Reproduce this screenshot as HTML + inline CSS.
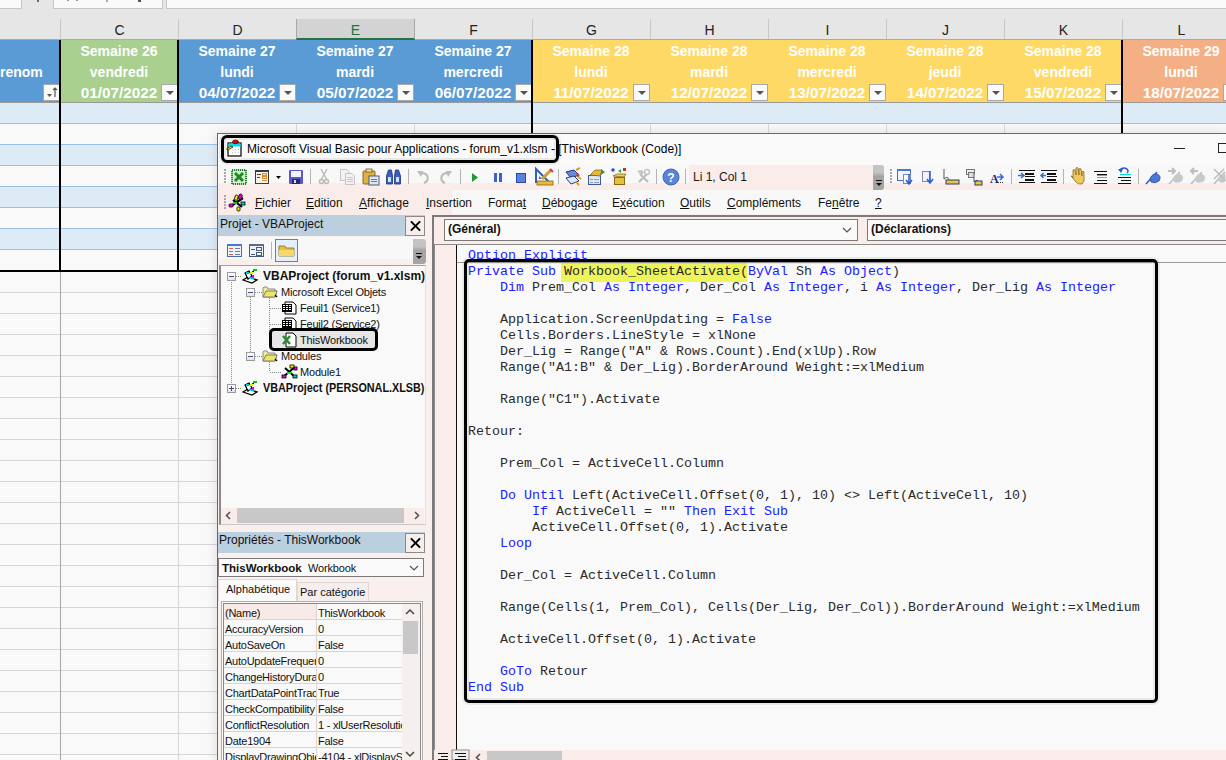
<!DOCTYPE html>
<html><head><meta charset="utf-8">
<style>
*{margin:0;padding:0;box-sizing:border-box}
html,body{width:1226px;height:760px;overflow:hidden;background:#f9f9f9;font-family:"Liberation Sans",sans-serif}
.a{position:absolute}
#xl{position:absolute;left:0;top:0;width:1226px;height:760px;background:#f9f9f9}
.colh{position:absolute;top:19px;height:20px;border-left:1px solid #c8c8c8;font-size:14px;color:#222;text-align:center;line-height:23px}
.hd{position:absolute;top:40px;height:62px;color:#fff;font-weight:bold;font-size:14px;text-align:center;line-height:21px;padding-top:1px}
.hd span:nth-child(3){font-size:15.3px;line-height:20px}
.hd span{display:block}
.dd{position:absolute;width:17px;height:17px;top:84px;background:#fafafa;border:1px solid #a8a8a8}
.dd:after{content:"";position:absolute;left:4px;top:6px;border-left:4px solid transparent;border-right:4px solid transparent;border-top:4px solid #555}
.xb{width:20px;height:20px;background:#f6eeec;border:1px solid #8a8a8a}
.xb:before,.xb:after{content:"";position:absolute;left:3px;top:8px;width:13px;height:2px;background:#000;transform:rotate(45deg)}
.xb:after{transform:rotate(-45deg)}
.kw{color:#2020ff}
.hl{background:#eef55c}
.vb{position:absolute;background:#000;width:2px}
</style></head><body>
<div id="xl">
  <!-- formula bar strip -->
  <div class="a" style="left:0;top:0;width:1226px;height:40px;background:#e6e6e6"></div>
  <div class="a" style="left:0;top:0;width:22px;height:9px;background:#fafafa;border-right:1px solid #c6c6c6;border-bottom:1px solid #c6c6c6"></div>
  <div class="a" style="left:53px;top:0;width:110px;height:9px;background:#fafafa;border:1px solid #c6c6c6;border-top:0"></div>
  <div class="a" style="left:166px;top:0;width:1060px;height:9px;background:#fafafa;border-left:1px solid #c6c6c6;border-bottom:1px solid #c6c6c6"></div>
  <div class="a" style="left:37px;top:0;width:2px;height:2px;background:#666"></div><div class="a" style="left:67px;top:0;width:2px;height:1px;background:#999"></div><div class="a" style="left:76px;top:0;width:2px;height:1px;background:#999"></div><div class="a" style="left:106px;top:0;width:2px;height:2px;background:#aaa"></div><div class="a" style="left:138px;top:0;width:3px;height:2px;background:#555"></div>
  <!-- column headers -->
  <div class="colh" style="left:60px;width:118px">C</div>
  <div class="colh" style="left:178px;width:118px">D</div>
  <div class="colh" style="left:296px;width:119px;height:21px;background:#d3d3d3;color:#217346;border-left-color:#a8a8a8;border-right:1px solid #a8a8a8;border-bottom:2px solid #217346;z-index:2">E</div>
  <div class="colh" style="left:414px;width:118px">F</div>
  <div class="colh" style="left:532px;width:118px">G</div>
  <div class="colh" style="left:650px;width:118px">H</div>
  <div class="colh" style="left:768px;width:118px">I</div>
  <div class="colh" style="left:886px;width:118px">J</div>
  <div class="colh" style="left:1004px;width:118px">K</div>
  <div class="colh" style="left:1122px;width:118px">L</div>
  <div class="a" style="left:0;top:39px;width:1226px;height:1px;background:#ababab"></div>
  <!-- table header -->
  <div class="hd" style="left:0;width:60px;background:#5b9bd5;text-align:right;padding-right:19px"><span>&nbsp;</span><span>renom</span></div>
  <div class="a" style="left:43px;top:84px;width:17px;height:17px;background:#fafafa;border:1px solid #a8a8a8"><svg class="a" style="left:0;top:0" width="15" height="15" viewBox="0 0 15 15"><path d="M3 9 L8 9 L5.5 12 Z" fill="#555"/><path d="M11 3 V12 M9 5 L11 3 L13 5" stroke="#555" stroke-width="1.2" fill="none"/></svg></div>
  <div class="hd" style="left:60px;width:118px;background:#a9d08e"><span>Semaine 26</span><span>vendredi</span><span>01/07/2022</span></div>
  <div class="hd" style="left:178px;width:118px;background:#5b9bd5"><span>Semaine 27</span><span>lundi</span><span>04/07/2022</span></div>
  <div class="hd" style="left:296px;width:118px;background:#5b9bd5"><span>Semaine 27</span><span>mardi</span><span>05/07/2022</span></div>
  <div class="hd" style="left:414px;width:118px;background:#5b9bd5"><span>Semaine 27</span><span>mercredi</span><span>06/07/2022</span></div>
  <div class="hd" style="left:532px;width:118px;background:#ffd966"><span>Semaine 28</span><span>lundi</span><span>11/07/2022</span></div>
  <div class="hd" style="left:650px;width:118px;background:#ffd966"><span>Semaine 28</span><span>mardi</span><span>12/07/2022</span></div>
  <div class="hd" style="left:768px;width:118px;background:#ffd966"><span>Semaine 28</span><span>mercredi</span><span>13/07/2022</span></div>
  <div class="hd" style="left:886px;width:118px;background:#ffd966"><span>Semaine 28</span><span>jeudi</span><span>14/07/2022</span></div>
  <div class="hd" style="left:1004px;width:118px;background:#ffd966"><span>Semaine 28</span><span>vendredi</span><span>15/07/2022</span></div>
  <div class="hd" style="left:1122px;width:118px;background:#f4b084"><span>Semaine 29</span><span>lundi</span><span>18/07/2022</span></div>
  <div class="dd" style="left:161px"></div>
  <div class="dd" style="left:279px"></div>
  <div class="dd" style="left:397px"></div>
  <div class="dd" style="left:515px"></div>
  <div class="dd" style="left:633px"></div>
  <div class="dd" style="left:751px"></div>
  <div class="dd" style="left:869px"></div>
  <div class="dd" style="left:987px"></div>
  <div class="dd" style="left:1105px"></div>
  <div class="dd" style="left:1223px"></div>
  <div class="a" style="left:0;top:102px;width:1226px;height:1px;background:#9a9a9a"></div>
  <!-- rows -->
  <div class="a" style="left:0;top:103px;width:1226px;height:20px;background:#ddebf7"></div>
<div class="a" style="left:0;top:123px;width:1226px;height:1px;background:#9bc2e6"></div>
<div class="a" style="left:0;top:124px;width:1226px;height:20px;background:#f9f9f9"></div>
<div class="a" style="left:296px;top:124px;width:1px;height:20px;background:#d9d9d9"></div>
<div class="a" style="left:414px;top:124px;width:1px;height:20px;background:#d9d9d9"></div>
<div class="a" style="left:650px;top:124px;width:1px;height:20px;background:#d9d9d9"></div>
<div class="a" style="left:768px;top:124px;width:1px;height:20px;background:#d9d9d9"></div>
<div class="a" style="left:886px;top:124px;width:1px;height:20px;background:#d9d9d9"></div>
<div class="a" style="left:1004px;top:124px;width:1px;height:20px;background:#d9d9d9"></div>
<div class="a" style="left:0;top:144px;width:1226px;height:1px;background:#9bc2e6"></div>
<div class="a" style="left:0;top:145px;width:1226px;height:20px;background:#ddebf7"></div>
<div class="a" style="left:0;top:165px;width:1226px;height:1px;background:#9bc2e6"></div>
<div class="a" style="left:0;top:166px;width:1226px;height:20px;background:#f9f9f9"></div>
<div class="a" style="left:296px;top:166px;width:1px;height:20px;background:#d9d9d9"></div>
<div class="a" style="left:414px;top:166px;width:1px;height:20px;background:#d9d9d9"></div>
<div class="a" style="left:650px;top:166px;width:1px;height:20px;background:#d9d9d9"></div>
<div class="a" style="left:768px;top:166px;width:1px;height:20px;background:#d9d9d9"></div>
<div class="a" style="left:886px;top:166px;width:1px;height:20px;background:#d9d9d9"></div>
<div class="a" style="left:1004px;top:166px;width:1px;height:20px;background:#d9d9d9"></div>
<div class="a" style="left:0;top:186px;width:1226px;height:1px;background:#9bc2e6"></div>
<div class="a" style="left:0;top:187px;width:1226px;height:20px;background:#ddebf7"></div>
<div class="a" style="left:0;top:207px;width:1226px;height:1px;background:#9bc2e6"></div>
<div class="a" style="left:0;top:208px;width:1226px;height:20px;background:#f9f9f9"></div>
<div class="a" style="left:296px;top:208px;width:1px;height:20px;background:#d9d9d9"></div>
<div class="a" style="left:414px;top:208px;width:1px;height:20px;background:#d9d9d9"></div>
<div class="a" style="left:650px;top:208px;width:1px;height:20px;background:#d9d9d9"></div>
<div class="a" style="left:768px;top:208px;width:1px;height:20px;background:#d9d9d9"></div>
<div class="a" style="left:886px;top:208px;width:1px;height:20px;background:#d9d9d9"></div>
<div class="a" style="left:1004px;top:208px;width:1px;height:20px;background:#d9d9d9"></div>
<div class="a" style="left:0;top:228px;width:1226px;height:1px;background:#9bc2e6"></div>
<div class="a" style="left:0;top:229px;width:1226px;height:20px;background:#ddebf7"></div>
<div class="a" style="left:0;top:249px;width:1226px;height:1px;background:#9bc2e6"></div>
<div class="a" style="left:0;top:250px;width:1226px;height:20px;background:#f9f9f9"></div>
<div class="a" style="left:296px;top:250px;width:1px;height:20px;background:#d9d9d9"></div>
<div class="a" style="left:414px;top:250px;width:1px;height:20px;background:#d9d9d9"></div>
<div class="a" style="left:650px;top:250px;width:1px;height:20px;background:#d9d9d9"></div>
<div class="a" style="left:768px;top:250px;width:1px;height:20px;background:#d9d9d9"></div>
<div class="a" style="left:886px;top:250px;width:1px;height:20px;background:#d9d9d9"></div>
<div class="a" style="left:1004px;top:250px;width:1px;height:20px;background:#d9d9d9"></div>
<div class="a" style="left:0;top:270px;width:1226px;height:2px;background:#000"></div>
<div class="a" style="left:0;top:292px;width:217px;height:1px;background:#d6d6d6"></div>
<div class="a" style="left:0;top:313px;width:217px;height:1px;background:#d6d6d6"></div>
<div class="a" style="left:0;top:334px;width:217px;height:1px;background:#d6d6d6"></div>
<div class="a" style="left:0;top:355px;width:217px;height:1px;background:#d6d6d6"></div>
<div class="a" style="left:0;top:376px;width:217px;height:1px;background:#d6d6d6"></div>
<div class="a" style="left:0;top:397px;width:217px;height:1px;background:#d6d6d6"></div>
<div class="a" style="left:0;top:418px;width:217px;height:1px;background:#d6d6d6"></div>
<div class="a" style="left:0;top:439px;width:217px;height:1px;background:#d6d6d6"></div>
<div class="a" style="left:0;top:460px;width:217px;height:1px;background:#d6d6d6"></div>
<div class="a" style="left:0;top:481px;width:217px;height:1px;background:#d6d6d6"></div>
<div class="a" style="left:0;top:502px;width:217px;height:1px;background:#d6d6d6"></div>
<div class="a" style="left:0;top:523px;width:217px;height:1px;background:#d6d6d6"></div>
<div class="a" style="left:0;top:544px;width:217px;height:1px;background:#d6d6d6"></div>
<div class="a" style="left:0;top:565px;width:217px;height:1px;background:#d6d6d6"></div>
<div class="a" style="left:0;top:586px;width:217px;height:1px;background:#d6d6d6"></div>
<div class="a" style="left:0;top:607px;width:217px;height:1px;background:#d6d6d6"></div>
<div class="a" style="left:0;top:628px;width:217px;height:1px;background:#d6d6d6"></div>
<div class="a" style="left:0;top:649px;width:217px;height:1px;background:#d6d6d6"></div>
<div class="a" style="left:0;top:670px;width:217px;height:1px;background:#d6d6d6"></div>
<div class="a" style="left:0;top:691px;width:217px;height:1px;background:#d6d6d6"></div>
<div class="a" style="left:0;top:712px;width:217px;height:1px;background:#d6d6d6"></div>
<div class="a" style="left:0;top:733px;width:217px;height:1px;background:#d6d6d6"></div>
<div class="a" style="left:0;top:754px;width:217px;height:1px;background:#d6d6d6"></div>
<div class="a" style="left:0;top:775px;width:217px;height:1px;background:#d6d6d6"></div>
<div class="a" style="left:60px;top:272px;width:1px;height:488px;background:#a6a6a6"></div>
<div class="a" style="left:178px;top:272px;width:1px;height:488px;background:#d6d6d6"></div>
<div class="vb" style="left:59px;top:40px;height:232px"></div>
<div class="vb" style="left:177px;top:40px;height:232px"></div>
<div class="vb" style="left:531px;top:40px;height:232px"></div>
<div class="vb" style="left:1121px;top:40px;height:232px"></div>
</div>
<div id="vbe" style="position:absolute;left:0;top:0;width:1226px;height:760px">
 <!-- shadow -->
 
 
 <!-- window -->
 <div class="a" style="left:217px;top:133px;width:1009px;height:627px;background:#f9efec;border-left:1px solid #686868;border-top:1px solid #686868;box-shadow:0 0 9px 1px rgba(110,80,80,0.16)"></div>
 <!-- title bar -->
 <div class="a" style="left:218px;top:134px;width:1008px;height:31px;background:#fafafa"></div>
 <div class="a" style="left:247px;top:141px;font-size:12px;line-height:16px;color:#000;white-space:nowrap">Microsoft Visual Basic pour Applications - forum_v1.xlsm - [ThisWorkbook (Code)]</div>
 <div class="a" style="left:1174px;top:148px;width:11px;height:1px;background:#222"></div>
 <div class="a" style="left:1218px;top:143px;width:10px;height:10px;border:1px solid #222"></div>
 <div class="a" style="left:221px;top:135px;width:338px;height:28px;border:3.5px solid #000;border-radius:6px;box-shadow:0 0 0 2px rgba(0,0,0,.06),inset 0 0 0 2px rgba(0,0,0,.07)"></div>
 <!-- toolbar row 1 -->
 <div class="a" style="left:218px;top:165px;width:1008px;height:18px;background:#f8f8f8"></div>
 <div class="a" style="left:218px;top:183px;width:1008px;height:7px;background:#f9ece9"></div>
 <div class="a" style="left:689px;top:165px;width:185px;height:25px;background:#f9ece9"></div>
 <div class="a" style="left:693px;top:170px;font-size:12px;line-height:14px;color:#1a1a1a">Li 1, Col 1</div>
 <div class="a" style="left:873px;top:165px;width:11px;height:25px;background:linear-gradient(#c4c4c4,#c4c4c4 30%,#a4a4a4 45%,#a4a4a4);border-radius:0 3px 3px 0"></div>
 <!-- menu bar -->
 <div class="a" style="left:218px;top:190px;width:234px;height:25px;background:#f9ece9"></div>
 <div class="a" style="left:452px;top:190px;width:774px;height:24px;background:#f8f8f8"></div>
 <div id="menus" style="position:absolute;left:0;top:196px;font-size:12px;line-height:15px;color:#111">
  <span class="a" style="left:255px"><u>F</u>ichier</span>
  <span class="a" style="left:306px"><u>E</u>dition</span>
  <span class="a" style="left:359px"><u>A</u>ffichage</span>
  <span class="a" style="left:426px"><u>I</u>nsertion</span>
  <span class="a" style="left:488px">Forma<u>t</u></span>
  <span class="a" style="left:542px"><u>D</u>ébogage</span>
  <span class="a" style="left:612px">E<u>x</u>écution</span>
  <span class="a" style="left:680px"><u>O</u>utils</span>
  <span class="a" style="left:727px"><u>C</u>ompléments</span>
  <span class="a" style="left:818px">Fe<u>n</u>être</span>
  <span class="a" style="left:875px"><u>?</u></span>
 </div>
 <!-- project pane -->
 <div class="a" style="left:218px;top:215px;width:207px;height:21px;background:#bccfdf"></div>
 <div class="a" style="left:220px;top:216px;font-size:12px;line-height:16px;color:#111">Projet - VBAProject</div>
 <div class="a xb" style="left:405px;top:216px"></div>
 <div class="a" style="left:218px;top:237px;width:207px;height:22px;background:#f8f8f8"></div>
 <div class="a" style="left:413px;top:239px;width:13px;height:25px;background:linear-gradient(#c4c4c4,#c4c4c4 30%,#a4a4a4 45%,#a4a4a4);border-radius:0 3px 3px 0"></div>
 <div class="a" style="left:219px;top:265px;width:207px;height:260px;background:#f9f9f9;border-left:2px solid #8a8a8a;border-top:1px solid #a0a0a0;border-bottom:1px solid #c8c8c8;border-right:1px solid #e0e0e0"></div>
 <div id="tree" style="position:absolute;left:0;top:0;font-size:11px;letter-spacing:-0.2px;line-height:16px;color:#111"><div class="a" style="left:231px;top:282px;width:1px;height:102px;background:repeating-linear-gradient(#8a8a8a 0 1px,transparent 1px 2px)"></div>
<div class="a" style="left:250px;top:297px;width:1px;height:55px;background:repeating-linear-gradient(#8a8a8a 0 1px,transparent 1px 2px)"></div>
<div class="a" style="left:269px;top:298px;width:1px;height:43px;background:repeating-linear-gradient(#8a8a8a 0 1px,transparent 1px 2px)"></div>
<div class="a" style="left:269px;top:362px;width:1px;height:10px;background:repeating-linear-gradient(#8a8a8a 0 1px,transparent 1px 2px)"></div>
<div class="a" style="left:236px;top:276px;width:6px;height:1px;background:repeating-linear-gradient(90deg,#8a8a8a 0 1px,transparent 1px 2px)"></div>
<div class="a" style="left:255px;top:292px;width:7px;height:1px;background:repeating-linear-gradient(90deg,#8a8a8a 0 1px,transparent 1px 2px)"></div>
<div class="a" style="left:255px;top:356px;width:7px;height:1px;background:repeating-linear-gradient(90deg,#8a8a8a 0 1px,transparent 1px 2px)"></div>
<div class="a" style="left:236px;top:388px;width:6px;height:1px;background:repeating-linear-gradient(90deg,#8a8a8a 0 1px,transparent 1px 2px)"></div>
<div class="a" style="left:270px;top:308px;width:11px;height:1px;background:repeating-linear-gradient(90deg,#8a8a8a 0 1px,transparent 1px 2px)"></div>
<div class="a" style="left:270px;top:324px;width:11px;height:1px;background:repeating-linear-gradient(90deg,#8a8a8a 0 1px,transparent 1px 2px)"></div>
<div class="a" style="left:270px;top:340px;width:11px;height:1px;background:repeating-linear-gradient(90deg,#8a8a8a 0 1px,transparent 1px 2px)"></div>
<div class="a" style="left:270px;top:372px;width:11px;height:1px;background:repeating-linear-gradient(90deg,#8a8a8a 0 1px,transparent 1px 2px)"></div>
<div class="a" style="left:227px;top:272px;width:9px;height:9px;border:1px solid #9a9a9a;background:linear-gradient(#fff,#e4e4e4)"><div class="a" style="left:1px;top:3px;width:5px;height:1px;background:#3a4f8a"></div></div>
<svg class="a" style="left:242px;top:268px" width="17" height="16" viewBox="0 0 17 16"><path d="M1 12 L6 9 L15 12 L10 15 Z" fill="#fff" stroke="#000" stroke-width="1.3"/><path d="M3 5 L7 3 L10 8 L6 11 Z" fill="#dff" stroke="#000" stroke-width="1.2"/><rect x="4" y="4" width="3" height="2" fill="#0cc"/><rect x="7" y="9" width="5" height="2" fill="#0cc"/><path d="M9 5 L12 3" stroke="#000" stroke-width="1.2"/><rect x="11" y="1" width="4" height="2" fill="#0c0"/><rect x="8" y="4" width="3" height="2" fill="#ee0"/><rect x="10" y="7" width="2" height="3" fill="#e0e"/></svg>
<div class="a" style="left:263px;top:268px;font-weight:bold;font-size:12px;letter-spacing:0;white-space:nowrap">VBAProject (forum_v1.xlsm)</div>
<div class="a" style="left:246px;top:288px;width:9px;height:9px;border:1px solid #9a9a9a;background:linear-gradient(#fff,#e4e4e4)"><div class="a" style="left:1px;top:3px;width:5px;height:1px;background:#3a4f8a"></div></div>
<svg class="a" style="left:262px;top:286px" width="16" height="12" viewBox="0 0 16 12"><path d="M1 2 L1 11 L13 11 L15 5 L13 5 L13 3 L6 3 L5 1 L2 1 Z" fill="#f1ef9a" stroke="#8a8a8a" stroke-width="1"/><path d="M1 11 L4 5 L15 5 L13 11 Z" fill="#ecea5a" stroke="#7a7a7a" stroke-width="1"/><path d="M13 9 L15 11" stroke="#000" stroke-width="1.5"/></svg>
<div class="a" style="left:281px;top:284px;white-space:nowrap">Microsoft Excel Objets</div>
<svg class="a" style="left:281px;top:301px" width="16" height="14" viewBox="0 0 16 14"><path d="M4 1 L12 1 L15 4 L15 13 L4 13 Z" fill="#fff" stroke="#000" stroke-width="1"/><rect x="1" y="3" width="10" height="8" fill="#000"/><g fill="#fff"><rect x="2" y="4" width="2" height="1"/><rect x="5" y="4" width="2" height="1"/><rect x="8" y="4" width="2" height="1"/><rect x="2" y="6" width="2" height="1"/><rect x="5" y="6" width="2" height="1"/><rect x="8" y="6" width="2" height="1"/><rect x="2" y="8" width="2" height="1"/><rect x="5" y="8" width="2" height="1"/><rect x="8" y="8" width="2" height="1"/></g></svg>
<div class="a" style="left:300px;top:300px;white-space:nowrap">Feuil1 (Service1)</div>
<svg class="a" style="left:281px;top:317px" width="16" height="14" viewBox="0 0 16 14"><path d="M4 1 L12 1 L15 4 L15 13 L4 13 Z" fill="#fff" stroke="#000" stroke-width="1"/><rect x="1" y="3" width="10" height="8" fill="#000"/><g fill="#fff"><rect x="2" y="4" width="2" height="1"/><rect x="5" y="4" width="2" height="1"/><rect x="8" y="4" width="2" height="1"/><rect x="2" y="6" width="2" height="1"/><rect x="5" y="6" width="2" height="1"/><rect x="8" y="6" width="2" height="1"/><rect x="2" y="8" width="2" height="1"/><rect x="5" y="8" width="2" height="1"/><rect x="8" y="8" width="2" height="1"/></g></svg>
<div class="a" style="left:300px;top:316px;white-space:nowrap">Feuil2 (Service2)</div>
<div class="a" style="left:272px;top:331px;width:103px;height:17px;background:#e6e6e6"></div>
<svg class="a" style="left:281px;top:332px" width="16" height="16" viewBox="0 0 16 16"><path d="M5 1 L12 1 L15 4 L15 15 L5 15 Z" fill="#fff" stroke="#000" stroke-width="1"/><path d="M2 4 L9 12 M9 4 L2 12" stroke="#2f8a2f" stroke-width="2.5"/></svg>
<div class="a" style="left:300px;top:332px;white-space:nowrap">ThisWorkbook</div>
<div class="a" style="left:269px;top:328px;width:109px;height:23px;border:3.5px solid #000;border-radius:5px"></div>
<div class="a" style="left:246px;top:352px;width:9px;height:9px;border:1px solid #9a9a9a;background:linear-gradient(#fff,#e4e4e4)"><div class="a" style="left:1px;top:3px;width:5px;height:1px;background:#3a4f8a"></div></div>
<svg class="a" style="left:262px;top:350px" width="16" height="12" viewBox="0 0 16 12"><path d="M1 2 L1 11 L13 11 L15 5 L13 5 L13 3 L6 3 L5 1 L2 1 Z" fill="#f1ef9a" stroke="#8a8a8a" stroke-width="1"/><path d="M1 11 L4 5 L15 5 L13 11 Z" fill="#ecea5a" stroke="#7a7a7a" stroke-width="1"/><path d="M13 9 L15 11" stroke="#000" stroke-width="1.5"/></svg>
<div class="a" style="left:281px;top:348px;white-space:nowrap">Modules</div>
<svg class="a" style="left:281px;top:364px" width="17" height="16" viewBox="0 0 17 16"><path d="M2 13 L14 3 M4 4 L14 13" stroke="#000" stroke-width="2"/><rect x="9" y="1" width="4" height="3" fill="#ee0" stroke="#000" stroke-width=".8"/><rect x="13" y="3" width="3" height="3" fill="#e0e" stroke="#000" stroke-width=".8"/><rect x="1" y="11" width="4" height="3" fill="#e0e" stroke="#000" stroke-width=".8"/><rect x="6" y="8" width="4" height="2" fill="#0e0"/><rect x="12" y="11" width="4" height="3" fill="#0cc" stroke="#000" stroke-width=".8"/></svg>
<div class="a" style="left:300px;top:364px;white-space:nowrap">Module1</div>
<div class="a" style="left:227px;top:384px;width:9px;height:9px;border:1px solid #9a9a9a;background:linear-gradient(#fff,#e4e4e4)"><div class="a" style="left:1px;top:3px;width:5px;height:1px;background:#3a4f8a"></div><div class="a" style="left:3px;top:1px;width:1px;height:5px;background:#3a4f8a"></div></div>
<svg class="a" style="left:242px;top:380px" width="17" height="16" viewBox="0 0 17 16"><path d="M1 12 L6 9 L15 12 L10 15 Z" fill="#fff" stroke="#000" stroke-width="1.3"/><path d="M3 5 L7 3 L10 8 L6 11 Z" fill="#dff" stroke="#000" stroke-width="1.2"/><rect x="4" y="4" width="3" height="2" fill="#0cc"/><rect x="7" y="9" width="5" height="2" fill="#0cc"/><path d="M9 5 L12 3" stroke="#000" stroke-width="1.2"/><rect x="11" y="1" width="4" height="2" fill="#0c0"/><rect x="8" y="4" width="3" height="2" fill="#ee0"/><rect x="10" y="7" width="2" height="3" fill="#e0e"/></svg>
<div class="a" style="left:263px;top:380px;font-weight:bold;font-size:12px;letter-spacing:0;white-space:nowrap;transform:scaleX(0.9);transform-origin:0 0">VBAProject (PERSONAL.XLSB)</div></div>
 <!-- tree scrollbar -->
 <div class="a" style="left:221px;top:508px;width:203px;height:16px;background:#f9ece9"></div>
 <div class="a" style="left:237px;top:508px;width:167px;height:15px;background:#c8c8c8"></div>
 <!-- properties -->
 <div class="a" style="left:218px;top:532px;width:207px;height:21px;background:#bccfdf"></div>
 <div class="a" style="left:219px;top:532px;font-size:12px;line-height:16px;color:#111">Propriétés - ThisWorkbook</div>
 <div class="a xb" style="left:405px;top:533px"></div>
 <div class="a" style="left:218px;top:558px;width:206px;height:19px;background:#fafafa;border:1px solid #7a7a7a"></div>
 <div class="a" style="left:222px;top:561px;font-size:11.5px;line-height:14px;color:#111;white-space:nowrap"><b>ThisWorkbook</b></div><div class="a" style="left:308px;top:561px;font-size:11px;letter-spacing:-0.15px;line-height:14px;color:#111;white-space:nowrap">Workbook</div>
 <div class="a" style="left:218px;top:579px;width:79px;height:22px;background:#fafafa;border:1px solid #e0d6d3;border-bottom:0"></div>
 <div class="a" style="left:226px;top:582px;font-size:11px;line-height:14px;color:#111">Alphabétique</div>
 <div class="a" style="left:297px;top:582px;width:72px;height:19px;background:#f4eeec;border:1px solid #e0d6d3;border-bottom:0"></div>
 <div class="a" style="left:300px;top:585px;font-size:11px;line-height:14px;color:#111">Par catégorie</div>
 <div class="a" style="left:221px;top:601px;width:202px;height:159px;background:#f9f9f9;border:1px solid #b0b0b0;border-bottom:0"></div>
 <div class="a" style="left:223px;top:603px;width:198px;height:157px;border:1px solid #8a8a8a;border-bottom:0"></div>
 <div id="props" style="position:absolute;left:0;top:0;font-size:11px;letter-spacing:-0.25px;line-height:16px;color:#111"><div class="a" style="left:224px;top:604px;width:92px;height:15px;background:#f8ebe7"></div>
<div class="a" style="left:225px;top:605px;width:91px;height:16px;overflow:hidden;white-space:nowrap">(Name)</div>
<div class="a" style="left:318px;top:605px;width:84px;height:16px;overflow:hidden;white-space:nowrap">ThisWorkbook</div>
<div class="a" style="left:224px;top:619px;width:178px;height:1px;background:#dcd4cc"></div>
<div class="a" style="left:225px;top:621px;width:91px;height:16px;overflow:hidden;white-space:nowrap">AccuracyVersion</div>
<div class="a" style="left:318px;top:621px;width:84px;height:16px;overflow:hidden;white-space:nowrap">0</div>
<div class="a" style="left:224px;top:635px;width:178px;height:1px;background:#dcd4cc"></div>
<div class="a" style="left:225px;top:637px;width:91px;height:16px;overflow:hidden;white-space:nowrap">AutoSaveOn</div>
<div class="a" style="left:318px;top:637px;width:84px;height:16px;overflow:hidden;white-space:nowrap">False</div>
<div class="a" style="left:224px;top:651px;width:178px;height:1px;background:#dcd4cc"></div>
<div class="a" style="left:225px;top:653px;width:91px;height:16px;overflow:hidden;white-space:nowrap">AutoUpdateFrequency</div>
<div class="a" style="left:318px;top:653px;width:84px;height:16px;overflow:hidden;white-space:nowrap">0</div>
<div class="a" style="left:224px;top:667px;width:178px;height:1px;background:#dcd4cc"></div>
<div class="a" style="left:225px;top:669px;width:91px;height:16px;overflow:hidden;white-space:nowrap">ChangeHistoryDuration</div>
<div class="a" style="left:318px;top:669px;width:84px;height:16px;overflow:hidden;white-space:nowrap">0</div>
<div class="a" style="left:224px;top:683px;width:178px;height:1px;background:#dcd4cc"></div>
<div class="a" style="left:225px;top:685px;width:91px;height:16px;overflow:hidden;white-space:nowrap">ChartDataPointTrack</div>
<div class="a" style="left:318px;top:685px;width:84px;height:16px;overflow:hidden;white-space:nowrap">True</div>
<div class="a" style="left:224px;top:699px;width:178px;height:1px;background:#dcd4cc"></div>
<div class="a" style="left:225px;top:701px;width:91px;height:16px;overflow:hidden;white-space:nowrap">CheckCompatibility</div>
<div class="a" style="left:318px;top:701px;width:84px;height:16px;overflow:hidden;white-space:nowrap">False</div>
<div class="a" style="left:224px;top:715px;width:178px;height:1px;background:#dcd4cc"></div>
<div class="a" style="left:225px;top:717px;width:91px;height:16px;overflow:hidden;white-space:nowrap">ConflictResolution</div>
<div class="a" style="left:318px;top:717px;width:84px;height:16px;overflow:hidden;white-space:nowrap">1 - xlUserResolution</div>
<div class="a" style="left:224px;top:731px;width:178px;height:1px;background:#dcd4cc"></div>
<div class="a" style="left:225px;top:733px;width:91px;height:16px;overflow:hidden;white-space:nowrap">Date1904</div>
<div class="a" style="left:318px;top:733px;width:84px;height:16px;overflow:hidden;white-space:nowrap">False</div>
<div class="a" style="left:224px;top:747px;width:178px;height:1px;background:#dcd4cc"></div>
<div class="a" style="left:225px;top:749px;width:91px;height:16px;overflow:hidden;white-space:nowrap">DisplayDrawingObjects</div>
<div class="a" style="left:318px;top:749px;width:84px;height:16px;overflow:hidden;white-space:nowrap">-4104 - xlDisplayShapes</div>
<div class="a" style="left:224px;top:763px;width:178px;height:1px;background:#dcd4cc"></div>
<div class="a" style="left:316px;top:604px;width:1px;height:156px;background:#dcd4cc"></div>
<div class="a" style="left:402px;top:604px;width:18px;height:156px;background:#f5efed"></div>
<div class="a" style="left:403px;top:621px;width:15px;height:33px;background:#c8c8c8"></div>
<svg class="a" style="left:404px;top:607px" width="12" height="10" viewBox="0 0 12 10"><path d="M2 7 L6 3 L10 7" fill="none" stroke="#444" stroke-width="1.5"/></svg>
<svg class="a" style="left:404px;top:749px" width="12" height="10" viewBox="0 0 12 10"><path d="M2 3 L6 7 L10 3" fill="none" stroke="#444" stroke-width="1.5"/></svg></div>
 <!-- code window -->
 <div class="a" style="left:432px;top:215px;width:794px;height:545px;background:#f9ece9;border-left:2px solid #7a7a7a;border-top:2px solid #7a7a7a"></div>
 <div class="a" style="left:444px;top:219px;width:414px;height:22px;background:#fafafa;border:1px solid #7a7a7a"></div>
 <div class="a" style="left:448px;top:222px;font-size:12px;font-weight:bold;line-height:15px;color:#111">(Général)</div>
 <div class="a" style="left:867px;top:219px;width:400px;height:22px;background:#fafafa;border:1px solid #7a7a7a"></div>
 <div class="a" style="left:871px;top:222px;font-size:12px;font-weight:bold;line-height:15px;color:#111">(Déclarations)</div>
 <div class="a" style="left:434px;top:244px;width:792px;height:506px;background:#f9f9f9;border-left:1px solid #8a8a8a;border-top:1px solid #8a8a8a"></div>
 <div class="a" style="left:435px;top:245px;width:21px;height:505px;background:#f9ece9"></div>
 <div class="a" style="left:456px;top:245px;width:1px;height:515px;background:#111"></div>
 <div class="a" style="left:457px;top:262px;width:769px;height:1px;background:#9a9a9a"></div>
 <div class="a" style="left:561px;top:263px;width:186px;height:19px;background:#edf55a"></div>
 <div id="code" style="position:absolute;left:468px;top:248px;font-family:'Liberation Mono',monospace;font-size:13.33px;line-height:16px;color:#2a2a2a;white-space:pre"><span class="kw">Option Explicit</span>
<span class="kw">Private Sub </span>Workbook_SheetActivate(<span class="kw">ByVal</span> Sh <span class="kw">As Object</span>)
    <span class="kw">Dim</span> Prem_Col <span class="kw">As Integer</span>, Der_Col <span class="kw">As Integer</span>, i <span class="kw">As Integer</span>, Der_Lig <span class="kw">As Integer</span>

    Application.ScreenUpdating = <span class="kw">False</span>
    Cells.Borders.LineStyle = xlNone
    Der_Lig = Range(&quot;A&quot; &amp; Rows.Count).End(xlUp).Row
    Range(&quot;A1:B&quot; &amp; Der_Lig).BorderAround Weight:=xlMedium

    Range(&quot;C1&quot;).Activate

Retour:

    Prem_Col = ActiveCell.Column

    <span class="kw">Do Until</span> Left(ActiveCell.Offset(0, 1), 10) &lt;&gt; Left(ActiveCell, 10)
        <span class="kw">If</span> ActiveCell = &quot;&quot; <span class="kw">Then Exit Sub</span>
        ActiveCell.Offset(0, 1).Activate
    <span class="kw">Loop</span>

    Der_Col = ActiveCell.Column

    Range(Cells(1, Prem_Col), Cells(Der_Lig, Der_Col)).BorderAround Weight:=xlMedium

    ActiveCell.Offset(0, 1).Activate

    <span class="kw">GoTo</span> Retour
<span class="kw">End Sub</span></div>
 <div class="a" style="left:464px;top:259px;width:694px;height:444px;border:3.5px solid #000;border-radius:5px;box-shadow:0 0 0 2px rgba(0,0,0,.06),inset 0 0 0 2px rgba(0,0,0,.07)"></div>
 <!-- bottom scroll -->
 <div class="a" style="left:436px;top:751px;width:790px;height:9px;background:#f9ece9"></div>
 <div class="a" style="left:487px;top:751px;width:75px;height:9px;background:#c8c8c8"></div>
</div>

<svg class="a" style="left:0;top:0" width="1226" height="760" viewBox="0 0 1226 760">
<!-- title icon -->
<g transform="translate(226,140)">
 <rect x="2" y="3" width="13" height="13" fill="#fff" stroke="#000" stroke-width="1.2"/>
 <rect x="2.5" y="3.5" width="12" height="3" fill="#00e0f0"/>
 <g fill="#bbb"><rect x="6" y="9" width="1" height="1"/><rect x="9" y="9" width="1" height="1"/><rect x="12" y="9" width="1" height="1"/><rect x="6" y="12" width="1" height="1"/><rect x="9" y="12" width="1" height="1"/><rect x="12" y="12" width="1" height="1"/></g>
 <ellipse cx="9.5" cy="1.8" rx="3" ry="1.8" fill="#e00" stroke="#000" stroke-width=".6"/>
 <path d="M0.5 9 L5 6 L7 7 L2 10 Z" fill="#ee0" stroke="#000" stroke-width=".7"/>
</g>
<!-- toolbar1 grip -->
<g fill="#a8a8a8"><rect x="224" y="169" width="2" height="2"/><rect x="224" y="172" width="2" height="2"/><rect x="224" y="175" width="2" height="2"/><rect x="224" y="178" width="2" height="2"/><rect x="224" y="181" width="2" height="2"/></g>
<!-- excel -->
<rect x="232" y="170" width="14" height="14" fill="#d8ecd8" stroke="#1f8a1f" stroke-width="2" stroke-dasharray="1.2 0.8"/>
<path d="M235 173 L243 181 M243 173 L235 181" stroke="#1f8a1f" stroke-width="3"/>
<!-- userform -->
<rect x="255.5" y="170.5" width="13" height="13" fill="#f6f2ee" stroke="#3a3a3a" stroke-width="1"/>
<rect x="255" y="170" width="14" height="2" fill="#3a3a3a"/>
<g fill="#444"><rect x="257" y="174" width="4" height="1"/><rect x="257" y="177" width="3" height="1"/></g>
<g fill="none" stroke="#d98a2a" stroke-width="1"><rect x="262.5" y="173.5" width="4" height="2"/><rect x="262.5" y="176.5" width="4" height="2"/></g>
<rect x="262" y="180" width="5" height="1" fill="#d98a2a"/>
<path d="M276 176 L281 176 L278.5 179 Z" fill="#000"/>
<!-- save -->
<rect x="289" y="170" width="14" height="14" rx="1" fill="#5858c8"/>
<rect x="291" y="171" width="10" height="6" fill="#f0f0ff"/>
<rect x="292" y="179" width="8" height="5" fill="#2a2a70"/>
<rect x="294" y="180" width="2" height="3" fill="#ddd"/>
<rect x="310" y="169" width="1" height="15" fill="#b4b4b4"/>
<!-- cut -->
<g stroke="#b8b8b8" stroke-width="1.4" fill="none"><path d="M321 169 L327 180 M327 169 L321 180"/><circle cx="321.5" cy="181.5" r="2"/><circle cx="326.5" cy="181.5" r="2"/></g>
<!-- copy -->
<g fill="#f2f2f2" stroke="#c4c4c4" stroke-width="1"><path d="M340.5 169.5 H347 L349 171.5 V180.5 H340.5 Z"/><path d="M345.5 173.5 H352 L354.5 176 V184.5 H345.5 Z"/></g>
<g fill="#c8c8c8"><rect x="347" y="177" width="6" height="1"/><rect x="347" y="179" width="6" height="1"/><rect x="347" y="181" width="6" height="1"/></g>
<!-- paste -->
<rect x="363" y="171" width="12" height="13" rx="1" fill="#e0b040" stroke="#8a6a20" stroke-width="1"/>
<rect x="366" y="169" width="6" height="3" fill="#f4e0a0" stroke="#6a5a30" stroke-width=".8"/>
<rect x="369" y="176" width="10" height="9" fill="#dfe6f0" stroke="#4a5a7a" stroke-width="1"/>
<g fill="#6a7a9a"><rect x="371" y="179" width="6" height="1"/><rect x="371" y="181" width="6" height="1"/></g>
<!-- find -->
<g fill="#3a5fb8" stroke="#1a2f78" stroke-width=".8"><path d="M386.5 176 L388.5 170 H391.5 L392.5 176 V184 H386.5 Z"/><path d="M394.5 176 L395.5 170 H398.5 L400.5 176 V184 H394.5 Z"/></g>
<g fill="#cfe0ff"><rect x="388" y="177" width="3" height="5"/><rect x="396" y="177" width="3" height="5"/></g>
<rect x="408" y="169" width="1" height="15" fill="#b4b4b4"/>
<!-- undo/redo -->
<path d="M420 174 A5 5 0 1 1 424 183" fill="none" stroke="#bcbcbc" stroke-width="2.2"/><path d="M417 171 L421 177 L423 171 Z" fill="#bcbcbc"/>
<path d="M449 174 A5 5 0 1 0 445 183" fill="none" stroke="#bcbcbc" stroke-width="2.2"/><path d="M452 171 L448 177 L446 171 Z" fill="#bcbcbc"/>
<rect x="460" y="169" width="1" height="15" fill="#b4b4b4"/>
<!-- run pause stop -->
<path d="M472 173 L478 177.5 L472 182 Z" fill="#1c9c2c"/>
<g fill="#3a5fd0"><rect x="494" y="173" width="3" height="9"/><rect x="499" y="173" width="3" height="9"/></g>
<rect x="516.5" y="173.5" width="9" height="9" fill="#5a80e0" stroke="#2a4aa8" stroke-width="1"/>
<!-- design mode -->
<path d="M536 169 L536 182 L549 182 Z" fill="none" stroke="#2f5fc0" stroke-width="2"/>
<path d="M539 176 L539 179 L542 179 Z" fill="#2f5fc0"/>
<rect x="537" y="181" width="16" height="4" fill="#e8b838" stroke="#8a6a10" stroke-width=".8"/>
<path d="M542 179 L551 170" stroke="#c8a030" stroke-width="3"/><path d="M550 169 L553 172" stroke="#d04040" stroke-width="2"/>
<rect x="558" y="169" width="1" height="15" fill="#b4b4b4"/>
<!-- project explorer -->
<path d="M566 172 L574 170 L579 175 L571 178 Z" fill="#6a8ad8" stroke="#1a3a90" stroke-width="1"/>
<path d="M566 178 L574 176 L579 181 L571 184 Z" fill="#e0e8f8" stroke="#1a3a90" stroke-width="1"/>
<path d="M576 170 L580 168 M577 176 L581 179 M576 182 L579 185" stroke="#e0a020" stroke-width="2"/><circle cx="578" cy="175" r="1.5" fill="#e03030"/>
<!-- properties -->
<rect x="588.5" y="175.5" width="12" height="9" fill="#e0e8f4" stroke="#3a5aa0" stroke-width="1"/>
<g fill="#8a9ac0"><rect x="590" y="179" width="3" height="1"/><rect x="594" y="179" width="5" height="1"/><rect x="590" y="182" width="3" height="1"/><rect x="594" y="182" width="5" height="1"/></g>
<path d="M590 175 L595 170 L602 170 L600 176 Z" fill="#e8b838" stroke="#8a6a20" stroke-width=".8"/>
<path d="M601 169 L605 172 L601 175 Z" fill="#2a9a3a"/>
<!-- object browser -->
<path d="M613 176 L617 174 L626 174 L624 177 Z" fill="#f0d060" stroke="#8a6a10" stroke-width=".8"/>
<rect x="614.5" y="177.5" width="10" height="7" fill="#e8c040" stroke="#8a6a10" stroke-width="1"/>
<circle cx="613" cy="170" r="1.8" fill="#3a4ad0"/><path d="M618 171 L621 169 L621 173 Z" fill="#2aaa3a"/><rect x="623" y="168" width="3" height="3" fill="#d03020"/>
<!-- toolbox -->
<g stroke="#bcbcbc" stroke-width="2.2" fill="none"><path d="M639 182 L647 174"/><path d="M640 174 L648 182"/></g><path d="M637 171 L642 170 L644 173 L641 175 Z" fill="#c4c4c4"/><circle cx="647" cy="172" r="2.5" fill="none" stroke="#c4c4c4" stroke-width="1.5"/>
<rect x="656" y="169" width="1" height="15" fill="#b4b4b4"/>
<!-- help -->
<circle cx="671" cy="177" r="8" fill="#5a84d8" stroke="#3a64b8" stroke-width="1"/>
<text x="671" y="182" font-family="Liberation Sans" font-weight="bold" font-size="12" fill="#fff" text-anchor="middle">?</text>
<rect x="685" y="169" width="1" height="15" fill="#b4b4b4"/>
<!-- Li box dropdown mark -->
<g fill="#111"><rect x="876" y="180" width="6" height="1"/><path d="M876 183 L882 183 L879 186 Z"/></g>
<!-- toolbar2 grip -->
<g fill="#a8a8a8"><rect x="890" y="169" width="2" height="2"/><rect x="890" y="172" width="2" height="2"/><rect x="890" y="175" width="2" height="2"/><rect x="890" y="178" width="2" height="2"/><rect x="890" y="181" width="2" height="2"/></g>
<!-- list props -->
<rect x="897.5" y="169.5" width="13" height="11" fill="#f2f6fc" stroke="#4a6ab8" stroke-width="1"/><rect x="897" y="169" width="14" height="2" fill="#4a7ad0"/>
<rect x="903.5" y="174.5" width="7" height="9" fill="#fafafa" stroke="#7a8aa8" stroke-width="1"/>
<path d="M909 174 V183 M906 180 L909 184 L912 180" stroke="#2a5ad0" stroke-width="1.5" fill="none"/>
<!-- list constants -->
<rect x="922.5" y="171.5" width="7" height="10" fill="#f2f2f8" stroke="#7a8aa8" stroke-width="1"/>
<path d="M930 171 V182 M927 179 L930 183 L933 179" stroke="#2a5ad0" stroke-width="1.5" fill="none"/>
<!-- quick info -->
<path d="M944 169 L944 179 L947 177 L950 181" fill="#fff" stroke="#555" stroke-width="1"/>
<rect x="946" y="180" width="13" height="4" fill="#e8c838" stroke="#2a3a7a" stroke-width="1"/>
<!-- param info -->
<rect x="966.5" y="169.5" width="8" height="5" fill="#e8eef8" stroke="#777" stroke-width="1"/><rect x="968.5" y="172.5" width="6" height="5" fill="#dde" stroke="#777" stroke-width="1"/>
<path d="M974 173 L974 182 L977 180 L979 183" fill="#fff" stroke="#555" stroke-width="1"/>
<rect x="975" y="181" width="7" height="4" fill="#e8c838" stroke="#2a3a7a" stroke-width="1"/>
<!-- complete word -->
<text x="990" y="183" font-family="Liberation Serif" font-weight="bold" font-size="12" fill="#1a2a7a">A</text>
<path d="M997 177 H1003 M1000 174 L1003 177 L1000 180" stroke="#3a6ad8" stroke-width="1.5" fill="none"/>
<g fill="#333"><rect x="998" y="182" width="1" height="1"/><rect x="1000" y="182" width="1" height="1"/><rect x="1002" y="182" width="1" height="1"/></g>
<rect x="1011" y="169" width="1" height="15" fill="#b4b4b4"/>
<!-- indent -->
<g fill="#111"><rect x="1019" y="170" width="16" height="1"/><rect x="1025" y="173" width="9" height="2"/><rect x="1025" y="176" width="10" height="1"/><rect x="1025" y="179" width="9" height="2"/><rect x="1019" y="182" width="16" height="1"/></g>
<path d="M1018 175.5 H1023 M1021 173 L1024 175.5 L1021 178" stroke="#3a6ad8" stroke-width="1.5" fill="none"/>
<!-- outdent -->
<g fill="#111"><rect x="1041" y="170" width="16" height="1"/><rect x="1047" y="173" width="9" height="2"/><rect x="1047" y="176" width="10" height="1"/><rect x="1047" y="179" width="9" height="2"/><rect x="1041" y="182" width="16" height="1"/></g>
<path d="M1041 175.5 H1046 M1043.5 173 L1041 175.5 L1043.5 178" stroke="#3a6ad8" stroke-width="1.5" fill="none"/>
<rect x="1063" y="169" width="1" height="15" fill="#b4b4b4"/>
<!-- hand -->
<path d="M1072 177 L1075 181 Q1078 185 1082 184 Q1085 182 1084 176 L1084 172 Q1083 170 1082 172 L1082 176 L1081 169 Q1080 168 1079 169 L1079 175 L1078 168 Q1077 167 1076 168 L1076 175 L1075 170 Q1074 169 1073 170 L1073 178 Q1072 175 1071 176 Z" fill="#f0c860" stroke="#8a6a20" stroke-width=".8"/>
<!-- comment block -->
<g fill="#111"><rect x="1094" y="171" width="13" height="1"/><rect x="1097" y="174" width="10" height="1"/><rect x="1097" y="180" width="10" height="1"/><rect x="1094" y="183" width="13" height="1"/></g>
<rect x="1097" y="177" width="10" height="1" fill="#00d8e8"/><rect x="1097" y="175" width="10" height="1" fill="#00d8e8"/>
<!-- uncomment -->
<g fill="#111"><rect x="1118" y="177" width="13" height="1"/><rect x="1121" y="180" width="10" height="1"/><rect x="1118" y="183" width="13" height="1"/></g>
<rect x="1120" y="174" width="11" height="1" fill="#00d8e8"/>
<path d="M1120 171 A4 3 0 1 1 1127 173" fill="none" stroke="#2a5ad0" stroke-width="1.5"/><path d="M1118 169 L1121 173 L1123 169 Z" fill="#2a5ad0"/>
<rect x="1138" y="169" width="1" height="15" fill="#b4b4b4"/>
<!-- bookmark -->
<path d="M1146 184 L1157 172" stroke="#2a5ad0" stroke-width="1.5"/>
<path d="M1150 178 Q1153 173 1157 174 Q1162 176 1159 181 Q1155 184 1151 182 Z" fill="#4a78d8" stroke="#2a4aa8" stroke-width=".8"/>
<!-- next/prev/clear bookmarks gray -->
<g opacity=".9">
<path d="M1169 184 L1180 172" stroke="#a8b4d8" stroke-width="1.5"/><path d="M1173 178 Q1176 173 1180 174 Q1185 176 1182 181 Q1178 184 1174 182 Z" fill="#c4c4c4"/><path d="M1168 171 H1175 M1172 168 L1175 171 L1172 174" stroke="#b8b8b8" stroke-width="2" fill="none"/>
<path d="M1191 184 L1202 172" stroke="#a8b4d8" stroke-width="1.5"/><path d="M1195 178 Q1198 173 1202 174 Q1207 176 1204 181 Q1200 184 1196 182 Z" fill="#c4c4c4"/><path d="M1191 171 H1198 M1194 168 L1191 171 L1194 174" stroke="#b8b8b8" stroke-width="2" fill="none"/>
<path d="M1214 184 L1225 172" stroke="#a8b4d8" stroke-width="1.5"/><path d="M1218 178 Q1221 173 1225 174 L1226 181 Q1223 184 1219 182 Z" fill="#c4c4c4"/><path d="M1214 169 L1224 179 M1224 169 L1214 179" stroke="#b8b8b8" stroke-width="1.5"/>
</g>
<!-- menu grip + icon -->
<g fill="#a8a8a8"><rect x="224" y="195" width="2" height="2"/><rect x="224" y="198" width="2" height="2"/><rect x="224" y="201" width="2" height="2"/><rect x="224" y="204" width="2" height="2"/><rect x="224" y="207" width="2" height="2"/></g>
<g transform="translate(229,194)">
 <path d="M2 12 L14 4 M4 6 L13 13" stroke="#000" stroke-width="2.2"/>
 <rect x="6" y="1" width="3" height="5" rx="1" fill="#ee0" stroke="#000" stroke-width=".8" transform="rotate(20 7 3)"/>
 <rect x="10" y="0" width="3" height="5" rx="1" fill="#e0e" stroke="#000" stroke-width=".8" transform="rotate(20 11 2)"/>
 <rect x="0" y="10" width="4" height="3" rx="1" fill="#e0e" stroke="#000" stroke-width=".8"/>
 <rect x="4" y="8" width="4" height="2" fill="#0c0"/>
 <rect x="12" y="8" width="4" height="3" fill="#0cc" stroke="#000" stroke-width=".8"/>
 <rect x="8" y="13" width="3" height="4" rx="1" fill="#ee0" stroke="#000" stroke-width=".8"/>
</g>
<!-- project toolbar icons -->
<g transform="translate(227,244)">
 <rect x=".5" y=".5" width="14" height="12" fill="#eef2fa" stroke="#4a6ab8" stroke-width="1"/><rect x="0" y="0" width="15" height="2" fill="#4a78d0"/>
 <g fill="#d06a4a"><rect x="2" y="4" width="4" height="1"/><rect x="2" y="7" width="4" height="1"/><rect x="2" y="10" width="4" height="1"/></g>
 <g fill="#6a7aa8"><rect x="8" y="4" width="5" height="1"/><rect x="8" y="7" width="5" height="1"/><rect x="8" y="10" width="5" height="1"/></g>
</g>
<g transform="translate(249,244)">
 <rect x=".5" y=".5" width="14" height="12" fill="#eef2fa" stroke="#4a5a78" stroke-width="1"/><rect x="0" y="0" width="15" height="2" fill="#5a6a88"/>
 <g fill="none" stroke="#4a5a78" stroke-width="1"><rect x="7.5" y="3.5" width="5" height="3"/><rect x="7.5" y="8.5" width="5" height="3"/></g>
 <g fill="#4a5a78"><rect x="2" y="5" width="4" height="1"/><rect x="2" y="10" width="4" height="1"/></g>
</g>
<rect x="271" y="242" width="1" height="17" fill="#b4b4b4"/>
<rect x="275.5" y="239.5" width="22" height="22" fill="#e4f0fc" stroke="#3a8ae8" stroke-width="1"/>
<path d="M279 246 L279 256 L294 256 L294 248 L286 248 L285 246 Z" fill="#e8c040" stroke="#8a6a20" stroke-width=".8"/>
<path d="M279 250 L294 250 L294 256 L279 256 Z" fill="#f4d868"/>
<!-- project toolbar overflow mark -->
<g fill="#111"><rect x="416" y="253" width="6" height="1"/><path d="M416 256 L422 256 L419 259 Z"/></g>
<!-- tree scrollbar arrows -->
<path d="M230 512 L226.5 515.5 L230 519" fill="none" stroke="#555" stroke-width="1.6"/>
<path d="M415 512 L418.5 515.5 L415 519" fill="none" stroke="#555" stroke-width="1.6"/>
<!-- combo chevron -->
<path d="M410 566 L414 570 L418 566" fill="none" stroke="#555" stroke-width="1.2"/>
<path d="M843 228 L847 232 L851 228" fill="none" stroke="#555" stroke-width="1.2"/>
<!-- code window bottom icons -->
<g fill="#111"><rect x="438" y="753" width="10" height="1"/><rect x="441" y="756" width="7" height="1"/><rect x="438" y="759" width="10" height="1"/></g>
<rect x="452" y="750" width="17" height="10" fill="#f0f0f0" stroke="#8a8a8a" stroke-width="1"/>
<g fill="#111"><rect x="455" y="753" width="11" height="1"/><rect x="458" y="756" width="8" height="1"/><rect x="455" y="759" width="11" height="1"/></g>
<path d="M480 754 L476.5 757.5 L480 761" fill="none" stroke="#555" stroke-width="1.6"/>
</svg>

</body></html>
